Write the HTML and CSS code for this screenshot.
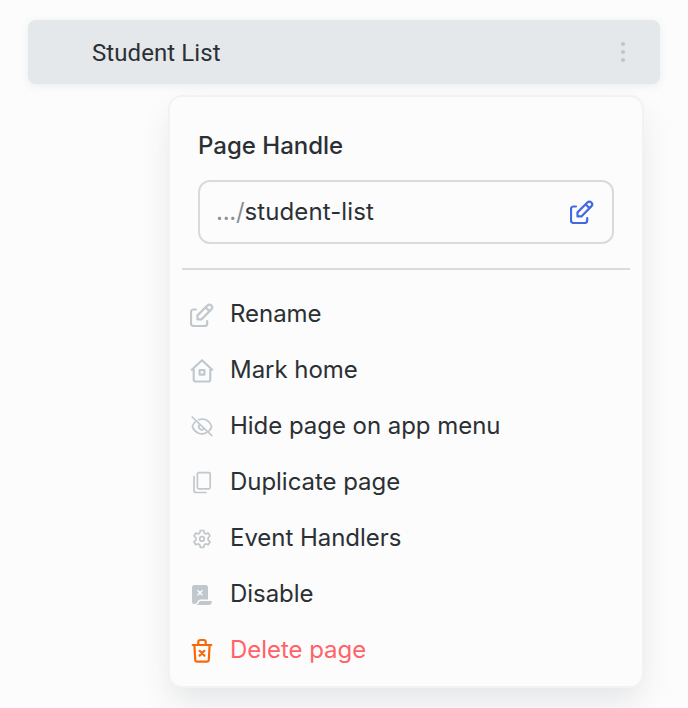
FILE: index.html
```html
<!DOCTYPE html>
<html lang="en">
<head>
<meta charset="utf-8">
<title>Pages</title>
<link rel="stylesheet" href="styles.css">
</head>
<body>
<svg class="sprite" aria-hidden="true">
  <symbol id="edit" viewBox="0 0 24 24"><path d="M6 6.500H3.500A2.500 2.500 0 0 0 1 9v11.500A2.500 2.500 0 0 0 3.500 23h11.200a2.500 2.500 0 0 0 2.500-2.500V18M7.500 16.400v-4L17.400 2.500a2.700 2.700 0 0 1 3.900 3.900L11.400 16.400zM15.600 4.300l3.900 3.900"/></symbol>
</svg>
<div class="page-row">
  <span class="page-name">Student List</span>
  <svg class="dots" viewBox="0 0 6 22"><circle cx="3" cy="3" r="2.100"/><circle cx="3" cy="11" r="2.100"/><circle cx="3" cy="19" r="2.100"/></svg>
</div>
<div class="menu">
  <div class="handle">
    <div class="label">Page Handle</div>
    <div class="field"><span class="slug"><span class="prefix">.../</span>student-list</span><svg class="icon blue"><use href="#edit"/></svg></div>
  </div>
  <div class="divider"></div>
  <div class="items">
    <div class="item"><svg class="icon"><use href="#edit"/></svg><span>Rename</span></div>
    <div class="item"><svg class="icon" viewBox="0 0 24 24"><path d="M1.800 10.800L12 1.300l10.200 9.500M3.700 10v10.500a2 2 0 0 0 2 2h12.600a2 2 0 0 0 2-2V10M9.600 11h4.800v4.600H9.600z"/></svg><span>Mark home</span></div>
    <div class="item"><svg class="icon thin" viewBox="0 0 24 24"><path d="M8.600 4.700C14.500 2.900 19 5.700 21.300 10.500q.5 1 0 2-.9 1.900-2.300 3.300M5.200 7Q3.600 8.500 2.700 10.500q-.5 1 0 2C5.300 18 11.200 20.500 16.300 17.700M9.500 9.500a3.200 3.200 0 0 0 4.600 4.400M2.200 2l19.600 18.700"/></svg><span>Hide page on app menu</span></div>
    <div class="item"><svg class="icon thin" viewBox="0 0 24 24"><rect x="7.400" y="1.600" width="12.800" height="16.200" rx="1.500"/><path d="M4 5.500v14a2 2 0 0 0 2 2h10"/></svg><span>Duplicate page</span></div>
    <div class="item"><svg class="icon thin" viewBox="0 0 24 24"><path d="M10.300 3.500h3.400l.6 2.500 1.500.9 2.500-.8 1.700 2.900-1.900 1.900v2l1.900 1.900-1.700 2.900-2.500-.8-1.500.9-.6 2.500h-3.400l-.6-2.500-1.500-.9-2.500.8L4 14.800l1.900-1.900v-2L4 9l1.700-2.900 2.500.8L9.700 6z"/><circle cx="12" cy="11.900" r="2.300"/></svg><span>Event Handlers</span></div>
    <div class="item"><svg class="icon" viewBox="0 0 24 24"><path class="solid" d="M4.500 2h11A2.500 2.500 0 0 1 18 4.500V16.500h-7.500Q8.300 16.500 7.700 18.500T4.500 21 2 18.500v-14A2.500 2.500 0 0 1 4.500 2zM10.500 18H21.800v.8a3.200 3.200 0 0 1-3.200 3.200H6.200q2.300-1 2.700-2.800.3-1.200 1.600-1.200z"/><path class="cross" d="M8 6.200l4 4m0-4l-4 4"/></svg><span>Disable</span></div>
    <div class="item danger"><svg class="icon orange" viewBox="0 0 24 24"><path d="M2.700 6h18.600M8.300 6V3a2 2 0 0 1 2-2h3.400a2 2 0 0 1 2 2v3M4.400 6.500l.8 14.200a2 2 0 0 0 2 1.900h9.600a2 2 0 0 0 2-1.900l.8-14.200M9.600 11.800l4.800 4.800m0-4.800l-4.800 4.800"/></svg><span>Delete page</span></div>
  </div>
</div>
</body>
</html>
```
FILE: styles.css
```css
* { box-sizing: border-box; }
body {
  margin: 0;
  height: 708px;
  padding: 20px 28px 0;
  overflow: hidden;
  background: #fcfcfc;
  color: #2b3034;
  font: 24px/32px Inter, sans-serif;
}
.sprite { display: none; }
.page-row {
  display: flex;
  align-items: center;
  justify-content: space-between;
  height: 64px;
  padding: 0 34px 0 64px;
  border-radius: 8px;
  background: #e4e8eb;
  box-shadow: 0 2px 8px rgba(48, 80, 110, .09);
}
.page-name { padding-top: 2px; font-family: Roboto, sans-serif; letter-spacing: .08px; }
.dots { width: 6px; height: 22px; fill: #c1c5c8; }
.menu {
  width: 476px;
  height: 593px;
  margin: 11px 0 0 140px;
  padding: 33px 12px 0;
  border: 2px solid #f1f2f3;
  border-radius: 14px;
  background: #fcfcfc;
  box-shadow: 0 16px 32px -4px rgba(48, 60, 78, .12);
}
.handle { padding: 0 16px; }
.label { font-weight: 500; }
.field {
  display: flex;
  align-items: center;
  justify-content: space-between;
  width: 416px;
  height: 64px;
  margin-top: 18px;
  padding: 0 18px 0 16px;
  border: 2px solid #d7dbdf;
  border-radius: 12px;
}
.slug { letter-spacing: .12px; }
.prefix { color: #889096; letter-spacing: -.25px; }
.divider { width: 448px; height: 2px; margin-top: 24px; background: #d9dcde; }
.items { padding: 16px 0 0 8px; }
.item { display: flex; align-items: center; gap: 16px; height: 56px; letter-spacing: -.04px; }
.item .icon { margin-top: 2px; }
.icon {
  flex: none;
  width: 24px;
  height: 24px;
  fill: none;
  stroke: #c1c8cd;
  stroke-width: 2.2;
  stroke-linecap: round;
  stroke-linejoin: round;
  overflow: visible;
}
.thin { stroke-width: 1.7; }
.blue { stroke: #4368e3; }
.orange { stroke: #f76808; }
.solid { fill: #c1c8cd; stroke: none; }
.icon .cross { stroke: #fcfcfc; stroke-width: 1.5; transform: translateY(1.5px); }
.danger { color: #ff6369; }
```
